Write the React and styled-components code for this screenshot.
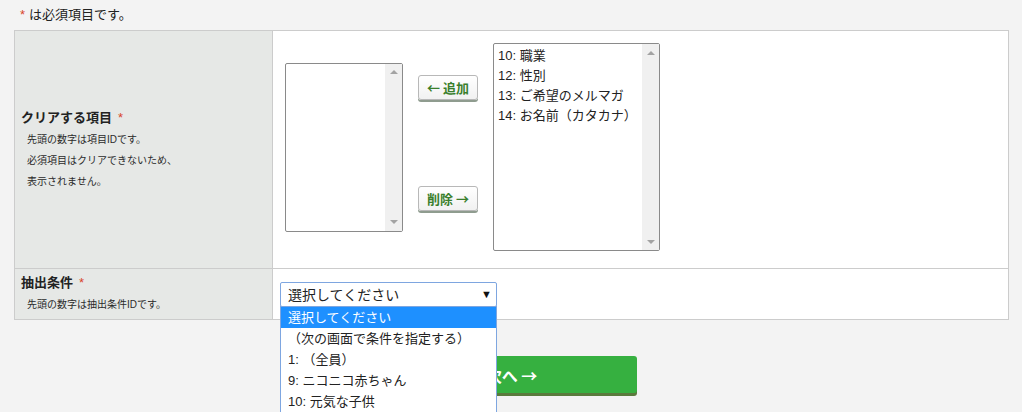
import React from "react";
import styled, { createGlobalStyle } from "styled-components";

const GlobalStyle = createGlobalStyle`
  body {
    margin: 0;
    background: #f3f3f3;
    color: #222;
    font-family: "Liberation Sans", "Noto Sans CJK JP", sans-serif;
  }
`;

const Page = styled.div`
  padding: 6px 14px 40px;
  width: 995px;
`;

const Notice = styled.p`
  margin: 0 0 6px 6px;
  font-size: 13px;
  line-height: 18px;
`;

const Req = styled.span`
  color: #d9452a;
  margin-right: ${(p) => p.gap || 0}px;
  margin-left: ${(p) => p.left || 0}px;
  font-weight: normal;
`;

const FormTable = styled.table`
  width: 995px;
  border-collapse: collapse;
  background: #fff;
`;

const Th = styled.th`
  width: 245px;
  height: ${(p) => p.h}px;
  padding: 0 6px;
  background: #e6e8e6;
  border: 1px solid #cccccc;
  text-align: left;
  vertical-align: middle;
  font-weight: normal;
`;

const Td = styled.td`
  height: ${(p) => p.h}px;
  padding: 0 0 ${(p) => p.pb || 0}px ${(p) => p.pl}px;
  border: 1px solid #cccccc;
  vertical-align: middle;
`;

const Title = styled.div`
  font-size: 13px;
  font-weight: bold;
  line-height: 20px;
`;

const Help = styled.div`
  margin-top: 1px;
  padding-left: 6px;
  font-size: 10px;
  line-height: 21px;
  color: #2a2a2a;
`;

const Shuttle = styled.div`
  display: flex;
  align-items: center;
  gap: 15px;
`;

const ListBox = styled.div`
  display: flex;
  width: ${(p) => p.w}px;
  height: ${(p) => p.h}px;
  box-sizing: border-box;
  border: 1px solid #8a8a8a;
  border-radius: 2px;
  background: #fff;
`;

const Items = styled.ul`
  flex: 1;
  margin: 0;
  padding: 2px 4px;
  list-style: none;
  font-size: 13px;
  line-height: 20px;
`;

const ScrollBar = styled.div`
  width: 17px;
  background: #f0f0f0;
  display: flex;
  flex-direction: column;
  justify-content: space-between;
`;

const Arrow = styled.div`
  height: 17px;
  display: flex;
  align-items: center;
  justify-content: center;
  &::before {
    content: "";
    border-left: 4px solid transparent;
    border-right: 4px solid transparent;
    ${(p) => (p.down ? "border-top" : "border-bottom")}: 4px solid #a3a3a3;
  }
`;

const MoveColumn = styled.div`
  display: flex;
  flex-direction: column;
  gap: 86px;
  margin-bottom: 8px;
`;

const MoveButton = styled.button`
  width: 60px;
  height: 25px;
  padding: 0;
  border: 1px solid #b8b8b8;
  border-radius: 3px;
  background: linear-gradient(#ffffff, #f1f1f1);
  box-shadow: 0 2px 0 #8f9c8f;
  color: #3a7f2c;
  font-family: "Noto Sans CJK JP", sans-serif;
  font-size: 13px;
  font-weight: bold;
  line-height: 1;
`;

const SelectWrap = styled.div`
  position: relative;
  width: 217px;
`;

const SelectBox = styled.div`
  height: 25px;
  box-sizing: border-box;
  display: flex;
  align-items: center;
  justify-content: space-between;
  padding: 0 4px 0 7px;
  border: 1px solid #7ea6e0;
  border-radius: 2px;
  background: #fff;
  font-size: 14px;
  &::after {
    content: "▼";
    font-size: 11px;
    color: #111;
  }
`;

const Dropdown = styled.ul`
  position: absolute;
  top: 24px;
  left: 0;
  width: 217px;
  box-sizing: border-box;
  margin: 0;
  padding: 0;
  list-style: none;
  border: 1px solid #7ea6e0;
  background: #fff;
  z-index: 5;
`;

const Option = styled.li`
  height: 21px;
  line-height: 21px;
  padding-left: 7px;
  font-size: 13px;
  background: ${(p) => (p.active ? "#1e90ff" : "#fff")};
  color: ${(p) => (p.active ? "#fff" : "#222")};
`;

const Footer = styled.div`
  display: flex;
  justify-content: center;
  margin-top: 36px;
`;

const NextButton = styled.button`
  width: 250px;
  height: 37px;
  border: none;
  border-radius: 3px;
  background: #36b040;
  box-shadow: 0 3px 0 #5a7a3c;
  color: #fff;
  font-family: "Noto Sans CJK JP", sans-serif;
  font-size: 16px;
  font-weight: bold;
  line-height: 1;
`;

const selected = ["10: 職業", "12: 性別", "13: ご希望のメルマガ", "14: お名前（カタカナ）"];
const options = [
  "選択してください",
  "（次の画面で条件を指定する）",
  "1: （全員）",
  "9: ニコニコ赤ちゃん",
  "10: 元気な子供",
];

const List = ({ w, h, items = [] }) => (
  <ListBox w={w} h={h}>
    <Items>
      {items.map((it) => (
        <li key={it}>{it}</li>
      ))}
    </Items>
    <ScrollBar>
      <Arrow />
      <Arrow down />
    </ScrollBar>
  </ListBox>
);

export default function App() {
  return (
    <>
      <GlobalStyle />
      <Page>
        <Notice>
          <Req gap={4}>*</Req>は必須項目です。
        </Notice>
        <FormTable>
          <tbody>
            <tr>
              <Th h={237}>
                <Title>
                  クリアする項目<Req left={6}>*</Req>
                </Title>
                <Help>
                  先頭の数字は項目IDです。
                  <br />
                  必須項目はクリアできないため、
                  <br />
                  表示されません。
                </Help>
              </Th>
              <Td h={232} pl={12} pb={5}>
                <Shuttle>
                  <List w={118} h={169} />
                  <MoveColumn>
                    <MoveButton>← 追加</MoveButton>
                    <MoveButton>削除 →</MoveButton>
                  </MoveColumn>
                  <List w={167} h={208} items={selected} />
                </Shuttle>
              </Td>
            </tr>
            <tr>
              <Th h={50}>
                <Title>
                  抽出条件<Req left={6}>*</Req>
                </Title>
                <Help>先頭の数字は抽出条件IDです。</Help>
              </Th>
              <Td h={50} pl={7}>
                <SelectWrap>
                  <SelectBox>選択してください</SelectBox>
                  <Dropdown>
                    {options.map((o, i) => (
                      <Option key={o} active={i === 0}>
                        {o}
                      </Option>
                    ))}
                  </Dropdown>
                </SelectWrap>
              </Td>
            </tr>
          </tbody>
        </FormTable>
        <Footer>
          <NextButton>次へ →</NextButton>
        </Footer>
      </Page>
    </>
  );
}
